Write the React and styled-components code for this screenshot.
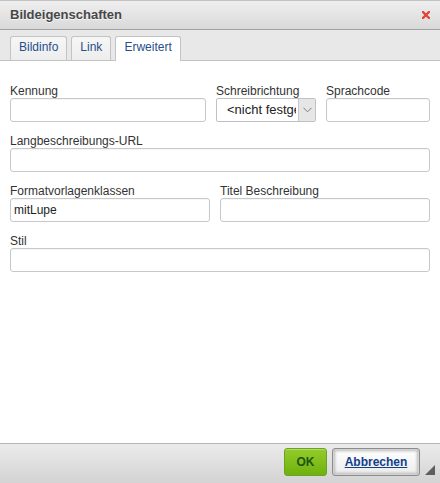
import React from "react";
import styled, { createGlobalStyle } from "styled-components";

const Global = createGlobalStyle`
  html, body { margin: 0; padding: 0; background: #fff; }
  body { font-family: "Liberation Sans", Arial, sans-serif; }
  * { box-sizing: border-box; }
`;

const Dialog = styled.div`
  width: 440px;
  height: 483px;
  display: flex;
  flex-direction: column;
  background: #fff;
  position: relative;
  font-family: "Liberation Sans", Arial, sans-serif;
`;

const TitleBar = styled.div`
  height: 30px;
  flex: none;
  display: flex;
  align-items: center;
  justify-content: space-between;
  padding: 0 10px 0 10px;
  border-top: 1px solid #c2c2c2;
  border-bottom: 1px solid #a3a3a3;
  background: linear-gradient(#efefef, #d9d9d9);
`;

const Title = styled.div`
  font-size: 13px;
  font-weight: bold;
  line-height: 28px;
  color: #474747;
  text-shadow: 0 1px 0 rgba(255, 255, 255, 0.75);
`;

const Close = styled.div`
  width: 8px;
  height: 8px;
  display: flex;
`;

const TabBar = styled.div`
  height: 31px;
  flex: none;
  display: flex;
  align-items: flex-end;
  gap: 4px;
  padding-left: 10px;
  background: #e8e8e8;
  border-bottom: 1px solid #c3c3c3;
`;

const Tab = styled.div`
  height: ${(p) => (p.$active ? "25px" : "24px")};
  margin-bottom: ${(p) => (p.$active ? "-1px" : "0")};
  padding: 0 8px;
  border: 1px solid #c3c3c3;
  border-bottom: none;
  border-radius: 3px 3px 0 0;
  background: ${(p) => (p.$active ? "#fff" : "linear-gradient(#f6f6f6, #ededed)")};
  color: #26508c;
  font-size: 12px;
  line-height: 20px;
`;

const Content = styled.div`
  flex: 1;
  display: flex;
  flex-direction: column;
  gap: 13px;
  padding: 24px 10px 0 10px;
`;

const Row = styled.div`
  display: grid;
  grid-template-columns: ${(p) => p.$cols};
  column-gap: 10px;
`;

const Field = styled.div`
  display: flex;
  flex-direction: column;
  min-width: 0;
`;

const Label = styled.label`
  display: block;
  font-size: 12px;
  line-height: 13px;
  color: #333;
  white-space: nowrap;
`;

const TextInput = styled.div`
  height: 24px;
  border: 1px solid #c6c8cb;
  border-radius: 3px;
  background: #fff;
  box-shadow: inset 0 1px 1px rgba(0, 0, 0, 0.04);
  padding: 0 3px;
  font-size: 12px;
  line-height: 22px;
  color: #222;
  white-space: nowrap;
  overflow: hidden;
`;

const SelectBox = styled.div`
  height: 24px;
  display: flex;
  border: 1px solid #bfc2c5;
  border-radius: 2px;
  background: #fff;
  overflow: hidden;
`;

const SelectValue = styled.div`
  flex: 1;
  min-width: 0;
  overflow: hidden;
  white-space: nowrap;
  margin-right: 2px;
  padding-left: 10px;
  font-size: 13px;
  line-height: 22px;
  color: #222;
`;

const SelectArrow = styled.div`
  width: 17px;
  flex: none;
  display: flex;
  align-items: center;
  justify-content: center;
  background: #e6e6e6;
  border-left: 1px solid #c6c6c6;
`;

const Footer = styled.div`
  height: 40px;
  flex: none;
  display: flex;
  justify-content: flex-end;
  align-items: flex-start;
  gap: 5px;
  padding: 4px 20px 0 0;
  border-top: 1px solid #b6b6b6;
  background: linear-gradient(#ebebeb, #d2d3d2);
`;

const Button = styled.div`
  height: 28px;
  display: flex;
  align-items: center;
  justify-content: center;
  font-size: 12px;
  font-weight: bold;
  border-radius: 3px;
`;

const OkButton = styled(Button)`
  width: 43px;
  color: #1f5410;
  border: 1px solid #6aa222;
  background: linear-gradient(#93cc2a, #6fb10f);
  box-shadow: inset 0 1px 0 rgba(255, 255, 255, 0.3);
`;

const CancelButton = styled(Button)`
  width: 88px;
  color: #123f8a;
  text-decoration: underline;
  border: 1px solid #8c8c8c;
  background: linear-gradient(#ffffff, #ececec);
  box-shadow: inset 0 0 0 1px #d2d2d2, inset 0 0 3px 2px #b9b9b9;
`;

const Grip = styled.div`
  position: absolute;
  right: 5px;
  bottom: 8px;
  width: 10px;
  height: 10px;
  display: flex;
`;

export default function App() {
  return (
    <>
      <Global />
      <Dialog>
        <TitleBar>
          <Title>Bildeigenschaften</Title>
          <Close>
            <svg width="8" height="8" viewBox="0 0 8 8">
              <path d="M1 1 L7 7 M7 1 L1 7" stroke="#e2433b" strokeWidth="2.3" strokeLinecap="square" />
            </svg>
          </Close>
        </TitleBar>
        <TabBar>
          <Tab>Bildinfo</Tab>
          <Tab>Link</Tab>
          <Tab $active>Erweitert</Tab>
        </TabBar>
        <Content>
          <Row $cols="196px 100px 104px">
            <Field>
              <Label>Kennung</Label>
              <TextInput />
            </Field>
            <Field>
              <Label>Schreibrichtung</Label>
              <SelectBox>
                <SelectValue>&lt;nicht festgelegt&gt;</SelectValue>
                <SelectArrow>
                  <svg width="9" height="6" viewBox="0 0 9 6">
                    <polyline points="0.5,0.8 4.5,4.8 8.5,0.8" fill="none" stroke="#7a7a7a" strokeWidth="1" />
                  </svg>
                </SelectArrow>
              </SelectBox>
            </Field>
            <Field>
              <Label>Sprachcode</Label>
              <TextInput />
            </Field>
          </Row>
          <Row $cols="1fr">
            <Field>
              <Label>Langbeschreibungs-URL</Label>
              <TextInput />
            </Field>
          </Row>
          <Row $cols="200px 210px">
            <Field>
              <Label>Formatvorlagenklassen</Label>
              <TextInput>mitLupe</TextInput>
            </Field>
            <Field>
              <Label>Titel Beschreibung</Label>
              <TextInput />
            </Field>
          </Row>
          <Row $cols="1fr">
            <Field>
              <Label>Stil</Label>
              <TextInput />
            </Field>
          </Row>
        </Content>
        <Footer>
          <OkButton>OK</OkButton>
          <CancelButton>Abbrechen</CancelButton>
        </Footer>
        <Grip>
          <svg width="10" height="10" viewBox="0 0 10 10">
            <polygon points="10,0 10,10 0,10" fill="#5e5e5e" />
          </svg>
        </Grip>
      </Dialog>
    </>
  );
}
